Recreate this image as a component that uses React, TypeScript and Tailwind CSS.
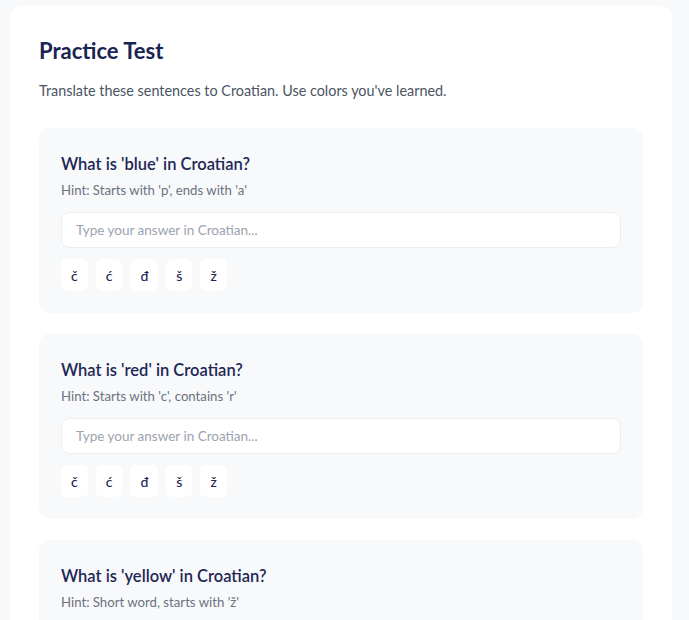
const questions = [
  { q: "What is 'blue' in Croatian?", hint: "Hint: Starts with 'p', ends with 'a'" },
  { q: "What is 'red' in Croatian?", hint: "Hint: Starts with 'c', contains 'r'" },
  { q: "What is 'yellow' in Croatian?", hint: "Hint: Short word, starts with 'ž'" },
]

const letters = ["č", "ć", "đ", "š", "ž"]

function Question({ q, hint }: { q: string; hint: string }) {
  return (
    <div className="rounded-[10px] bg-[#f8f9fb] px-[22px] pt-6 pb-[22px]">
      <h3 className="text-[16.5px] leading-6 font-semibold text-[#1e2755]">{q}</h3>
      <p className="mt-1 text-[13.2px] leading-5 text-[#6b7280]">{hint}</p>
      <input
        type="text"
        placeholder="Type your answer in Croatian..."
        className="mt-3 block h-9 w-full rounded-lg border border-[#eceef2] bg-white px-[14px] text-[13.5px] text-[#1e2755] placeholder-[#9ca3af] outline-none"
      />
      <div className="mt-[11px] flex gap-2">
        {letters.map((l) => (
          <button
            key={l}
            type="button"
            className="h-8 rounded-md bg-white px-[10px] text-[14px] font-medium text-[#1e2755]"
          >
            {l}
          </button>
        ))}
      </div>
    </div>
  )
}

export default function App() {
  return (
    <div
      className="min-h-screen bg-[#f8f9fb] pt-[6px] pl-[10px]"
      style={{ fontFamily: "Lato, 'Noto Sans', sans-serif" }}
    >
      <div className="w-[662px] rounded-xl bg-white px-[29px] pt-[31px] pb-8">
        <h1 className="text-[22px] leading-7 font-bold text-[#1a2453]">Practice Test</h1>
        <p className="mt-4 text-[14.4px] leading-5 text-[#4b5563]">
          Translate these sentences to Croatian. Use colors you've learned.
        </p>
        <div className="mt-[27px] flex flex-col gap-[21px]">
          {questions.map((item) => (
            <Question key={item.q} q={item.q} hint={item.hint} />
          ))}
        </div>
      </div>
    </div>
  )
}
